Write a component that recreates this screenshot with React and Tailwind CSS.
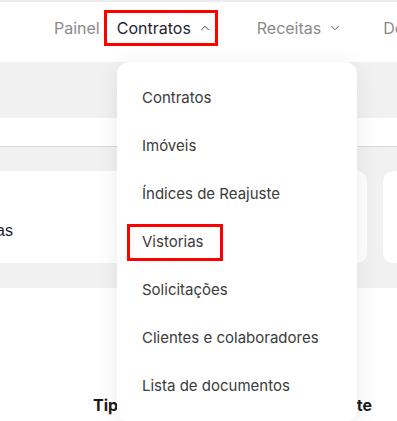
import React from "react";
import { ChevronUp, ChevronDown } from "lucide-react";

function App() {
  const items = [
    "Contratos",
    "Imóveis",
    "Índices de Reajuste",
    "Vistorias",
    "Solicitações",
    "Clientes e colaboradores",
    "Lista de documentos",
  ];

  return (
    <div className="relative w-[397px] h-[421px] overflow-hidden bg-white font-['Inter',sans-serif]">
      <div className="h-[2px] bg-[#ececec]"></div>

      {/* Top navigation */}
      <div className="h-[60px] pt-[8px]">
        <div className="h-[36px] flex items-center text-[16px] whitespace-nowrap">
          <span className="ml-[54px] text-[#8a8a8a]">Painel</span>
          <div className="ml-[4px] w-[114px] h-[36px] shrink-0 border-[3px] border-[#ff0000] flex items-center pl-[10px] text-[#1e2433]">
            Contratos
            <ChevronUp size={14} strokeWidth={1.6} className="ml-[7px] text-[#333]" />
          </div>
          <span className="ml-[39px] text-[#8a8a8a]">Receitas</span>
          <ChevronDown size={14} strokeWidth={1.6} className="ml-[7px] shrink-0 text-[#555]" />
          <span className="ml-[41px] text-[#8a8a8a]">De</span>
        </div>
      </div>

      {/* Page behind the menu */}
      <div className="h-[56px] bg-[#f1f1f1]"></div>
      <div className="h-[29px] bg-white border-b border-[#d9d9d9]"></div>
      <div className="h-[141px] bg-[#f1f1f1] pt-[24px] flex gap-[16px]">
        <div className="w-[367px] h-[92px] shrink-0 bg-white rounded-r-[10px] pt-[52px] font-['Liberation_Sans',sans-serif] text-[16px] text-[#1a1a2e] leading-none">
          <span className="-ml-[4px]">as</span>
        </div>
        <div className="w-[40px] h-[92px] shrink-0 bg-white rounded-l-[10px]"></div>
      </div>
      <div className="h-[133px] flex items-start pt-[105px] text-[16px] font-bold text-[#1a1a1a]">
        <span className="ml-[93px]">Tipo</span>
        <span className="ml-auto mr-[25px]">Cliente</span>
      </div>

      {/* Dropdown menu */}
      <div className="absolute left-[117px] top-[62px] w-[240px] h-[359px] bg-white rounded-[12px] shadow-[0_4px_24px_rgba(0,0,0,0.08)] pt-[12px]">
        {items.map((item) =>
          item === "Vistorias" ? (
            <div key={item} className="h-[48px] flex items-center">
              <div className="ml-[10px] w-[96px] h-[37px] border-[3px] border-[#ff0000] flex items-center pl-[12px] text-[15px] text-[#3b3b3b]">
                {item}
              </div>
            </div>
          ) : (
            <div key={item} className="h-[48px] flex items-center pl-[25px] text-[15px] text-[#3b3b3b] whitespace-nowrap">
              {item}
            </div>
          )
        )}
      </div>
    </div>
  );
}

export default App;
